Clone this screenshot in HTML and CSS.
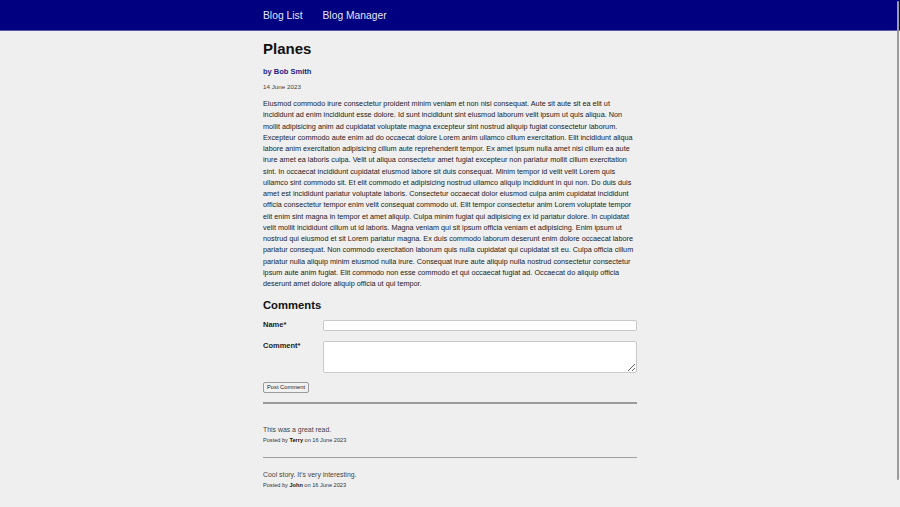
FILE: index.html
```html
<!DOCTYPE html>
<html lang="en">
<head>
<meta charset="utf-8">
<title>Planes</title>
<link rel="stylesheet" href="styles.css">
</head>
<body>
<header class="topbar">
  <nav class="nav">
    <a class="nav-link" href="#">Blog List</a>
    <a class="nav-link" href="#">Blog Manager</a>
  </nav>
</header>
<main class="page">
  <article class="post">
    <h1 class="post-title">Planes</h1>
    <div class="post-author">by Bob Smith</div>
    <div class="post-date">14 June 2023</div>
    <p class="post-body">Eiusmod commodo irure consectetur proident minim veniam et non nisi consequat. Aute sit aute sit ea elit ut incididunt ad enim incididunt esse dolore. Id sunt incididunt sint eiusmod laborum velit ipsum ut quis aliqua. Non mollit adipisicing anim ad cupidatat voluptate magna excepteur sint nostrud aliquip fugiat consectetur laborum. Excepteur commodo aute enim ad do occaecat dolore Lorem anim ullamco cillum exercitation. Elit incididunt aliqua labore anim exercitation adipisicing cillum aute reprehenderit tempor. Ex amet ipsum nulla amet nisi cillum ea aute irure amet ea laboris culpa. Velit ut aliqua consectetur amet fugiat excepteur non pariatur mollit cillum exercitation sint. In occaecat incididunt cupidatat eiusmod labore sit duis consequat. Minim tempor id velit velit Lorem quis ullamco sint commodo sit. Et elit commodo et adipisicing nostrud ullamco aliquip incididunt in qui non. Do duis duis amet est incididunt pariatur voluptate laboris. Consectetur occaecat dolor eiusmod culpa anim cupidatat incididunt officia consectetur tempor enim velit consequat commodo ut. Elit tempor consectetur anim Lorem voluptate tempor elit enim sint magna in tempor et amet aliquip. Culpa minim fugiat qui adipisicing ex id pariatur dolore. In cupidatat velit mollit incididunt cillum ut id laboris. Magna veniam qui sit ipsum officia veniam et adipisicing. Enim ipsum ut nostrud qui eiusmod et sit Lorem pariatur magna. Ex duis commodo laborum deserunt enim dolore occaecat labore pariatur consequat. Non commodo exercitation laborum quis nulla cupidatat qui cupidatat sit eu. Culpa officia cillum pariatur nulla aliquip minim eiusmod nulla irure. Consequat irure aute aliquip nulla nostrud consectetur consectetur ipsum aute anim fugiat. Elit commodo non esse commodo et qui occaecat fugiat ad. Occaecat do aliquip officia deserunt amet dolore aliquip officia ut qui tempor.</p>
  </article>
  <section class="comments">
    <h2 class="comments-title">Comments</h2>
    <form class="comment-form">
      <label class="form-label" for="name">Name*</label>
      <input class="form-input" id="name" type="text">
      <label class="form-label" for="comment">Comment*</label>
      <textarea class="form-textarea" id="comment"></textarea>
      <div class="form-actions"><button class="form-button" type="button">Post Comment</button></div>
    </form>
    <div class="comment-list">
      <div class="comment">
        <div class="comment-text">This was a great read.</div>
        <div class="comment-meta">Posted by <b>Terry</b> on 16 June 2023</div>
      </div>
      <div class="comment">
        <div class="comment-text">Cool story. It's very interesting.</div>
        <div class="comment-meta">Posted by <b>John</b> on 16 June 2023</div>
      </div>
    </div>
  </section>
</main>
<div class="scroll-thumb"></div>
</body>
</html>
```
FILE: styles.css
```css
html, body {
  margin: 0;
  padding: 0;
}
body {
  background: #efefef;
  font-family: "Liberation Sans", Arial, sans-serif;
  color: #222;
}
.topbar {
  background: #000080;
  height: 30px;
  border-bottom: 1px solid #5a5aa8;
}
.nav {
  width: 374px;
  margin: 0 auto;
  display: flex;
  gap: 20px;
  height: 30px;
  align-items: center;
  padding-top: 1px;
  box-sizing: border-box;
}
.nav-link {
  color: #e4e4f6;
  text-decoration: none;
  font-size: 10.3px;
}
.page {
  width: 374px;
  margin: 0 auto;
  padding-top: 9px;
}
.post-title {
  font-size: 15px;
  line-height: 18px;
  margin: 0;
  color: #111;
}
.post-author {
  margin-top: 9px;
  font-size: 7.5px;
  line-height: 10px;
  font-weight: bold;
  color: #1c1c8a;
}
.post-date {
  margin-top: 6px;
  font-size: 6.25px;
  line-height: 8px;
  color: #444;
}
.post-body {
  margin: 7px 0 0;
  font-size: 7.28px;
  line-height: 11.25px;
  color: #222;
}
.comments-title {
  margin: 9px 0 0;
  font-size: 11.25px;
  line-height: 14px;
  color: #111;
}
.comment-form {
  margin-top: 8px;
  display: grid;
  grid-template-columns: 60px 1fr;
  row-gap: 10px;
  padding-bottom: 9px;
  border-bottom: 2px solid #9a9a9a;
}
.form-label {
  font-size: 7.5px;
  font-weight: bold;
  line-height: 10px;
  color: #222;
}
.form-input {
  height: 11px;
  box-sizing: border-box;
  border: 1px solid #c9c9c9;
  border-radius: 2px;
  background: #fff;
  margin: 0;
  padding: 0;
}
.form-textarea {
  height: 32px;
  box-sizing: border-box;
  border: 1px solid #c9c9c9;
  border-radius: 2px;
  background: #fff;
  margin: 0;
  padding: 0;
  resize: vertical;
}
.form-actions {
  grid-column: 1 / 3;
  display: flex;
  margin-top: -1px;
}
.form-button {
  font-family: "Liberation Sans", Arial, sans-serif;
  font-size: 5.75px;
  height: 11px;
  padding: 0 3px;
  border: 1px solid #9c9c9c;
  border-radius: 2px;
  background: #f1f1f1;
  color: #222;
  line-height: 9px;
}
.comment {
  padding: 21px 0 13px;
}
.comment + .comment {
  border-top: 1px solid #a0a0a0;
  padding-top: 12px;
}
.comment-text {
  font-size: 6.9px;
  line-height: 10px;
  color: #444;
}
.comment-meta {
  margin-top: 1px;
  font-size: 5.6px;
  line-height: 8px;
  color: #333;
}
.comment-meta b {
  color: #111;
}
.scroll-thumb {
  position: fixed;
  top: 1px;
  right: 1px;
  width: 2px;
  height: 479px;
  background: #9c9c9c;
  border-radius: 1px;
}
```
